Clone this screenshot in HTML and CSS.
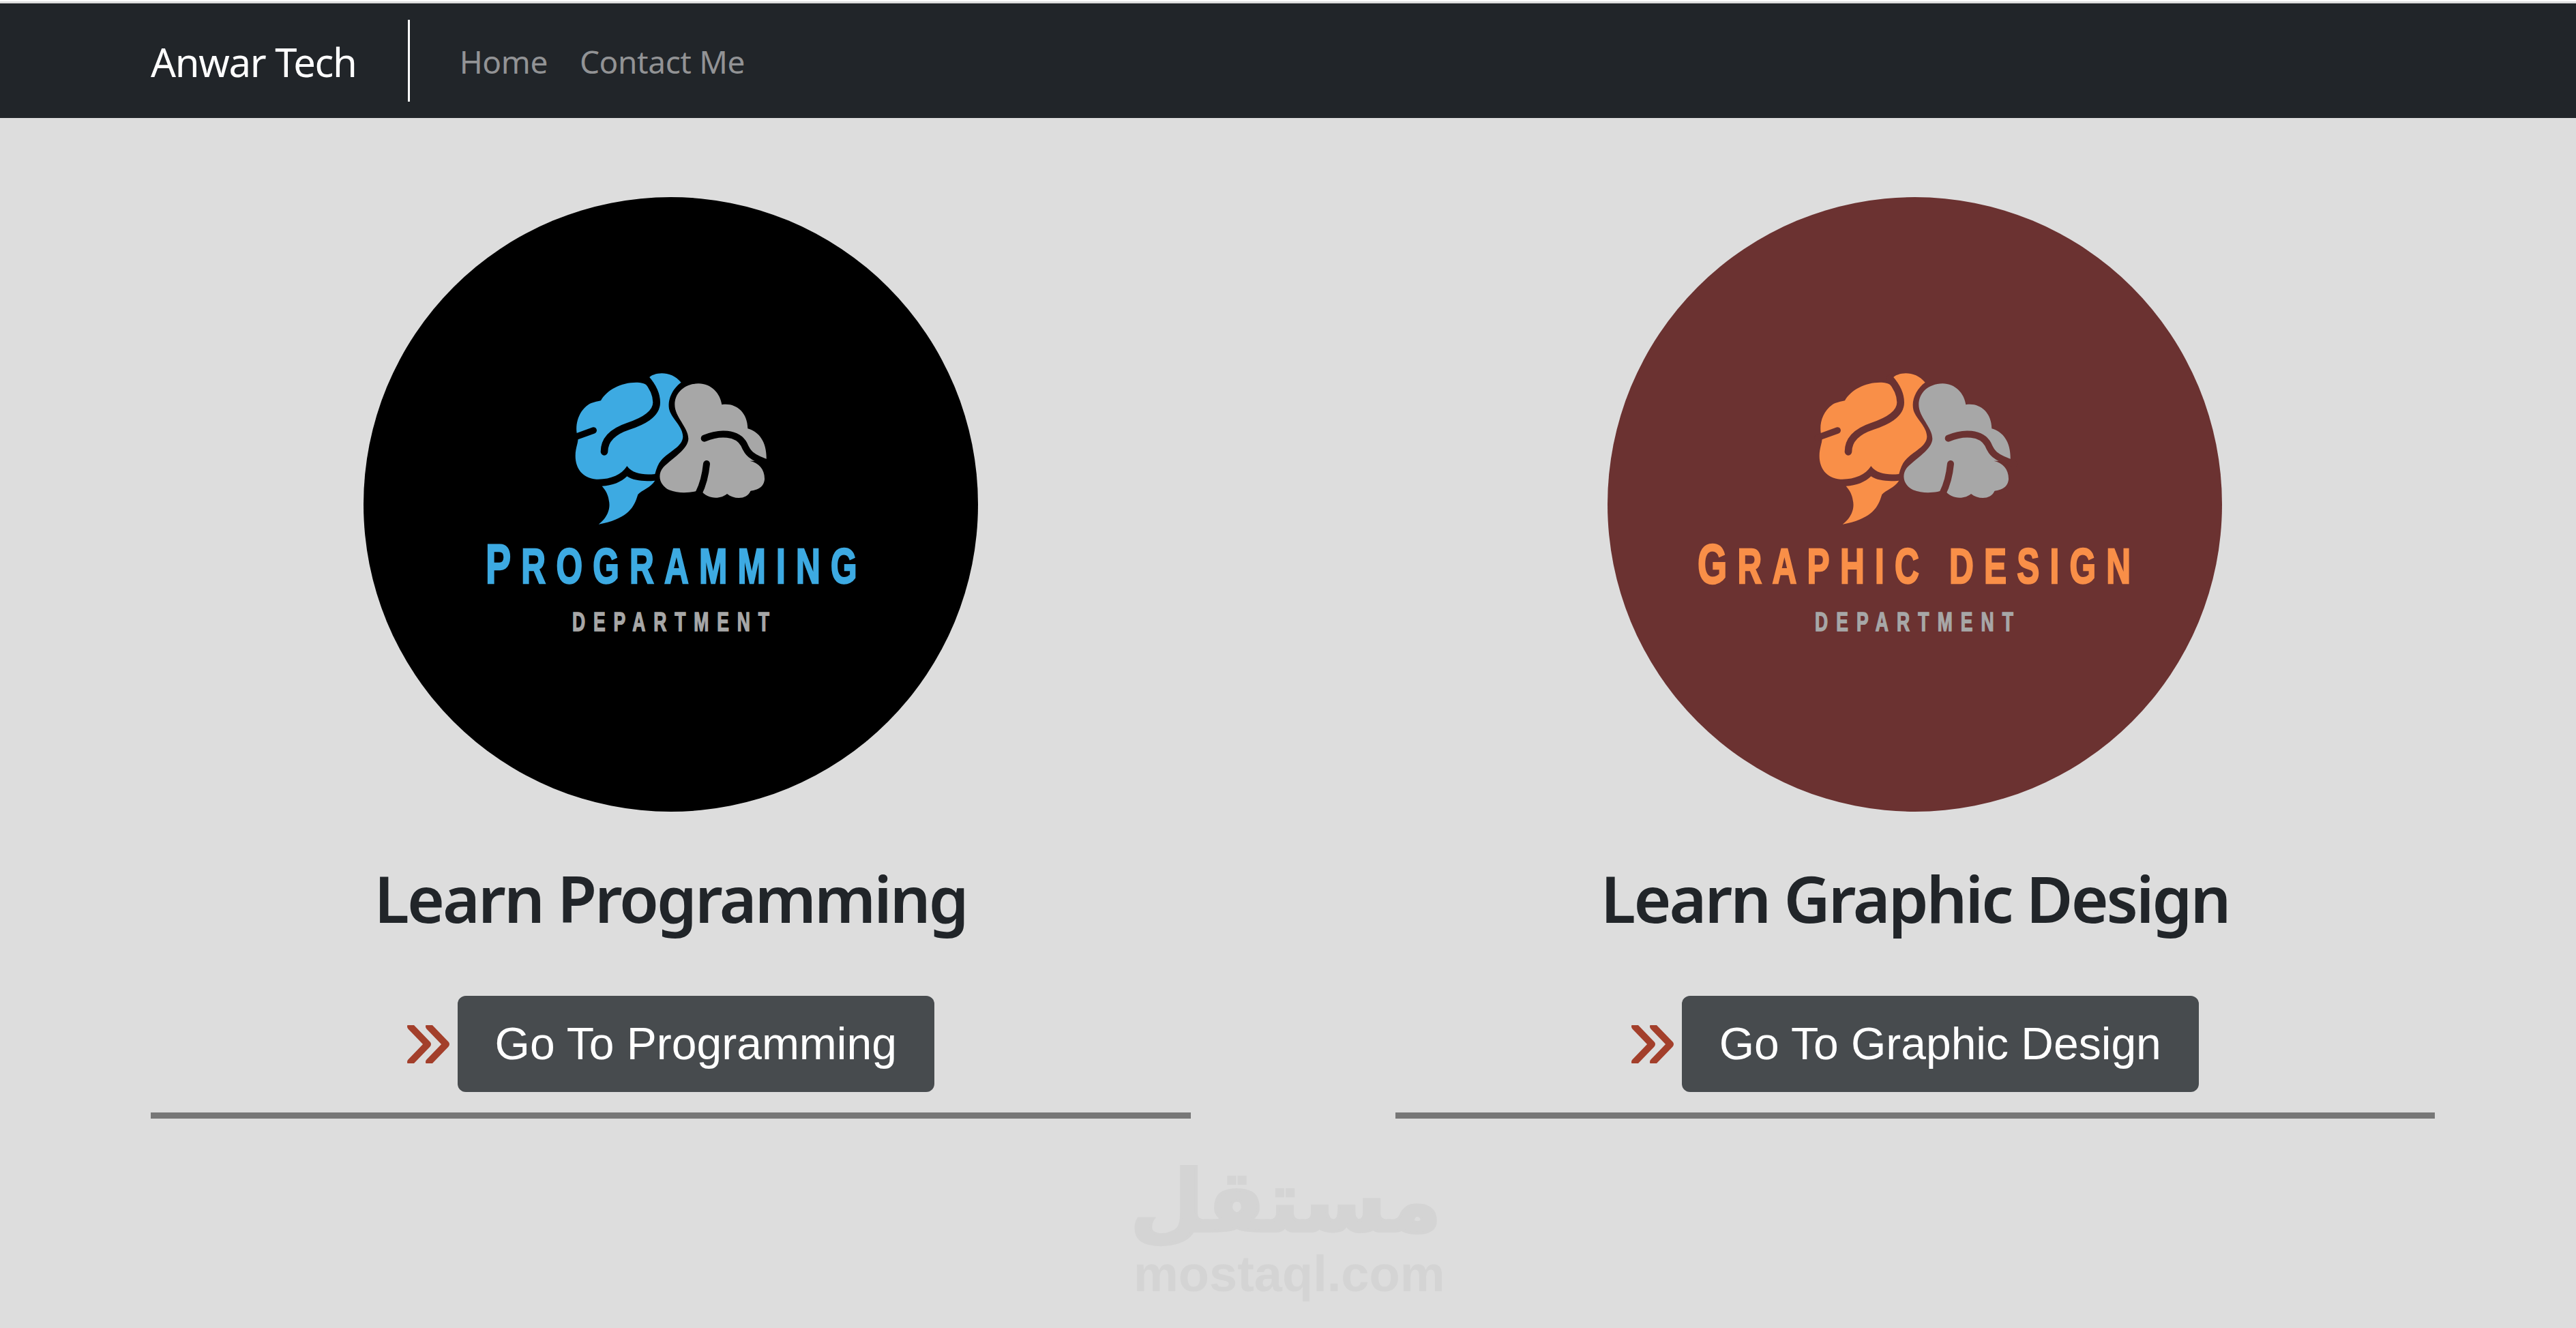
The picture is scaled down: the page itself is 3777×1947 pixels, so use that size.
FILE: index.html
```html
<!DOCTYPE html>
<html lang="en">
	<head>
		<meta charset="UTF-8" />
		<title>Anwar Tech</title>
		<link rel="stylesheet" href="styles.css">
	</head>

	<body>
		<!-- Shared brain drawing, coordinates are 3x page pixels -->
		<svg class="sprite" aria-hidden="true">
			<symbol id="brain" viewBox="0 0 960 750">
				<path class="lobeLeft" d="M390 72C415 45 490 38 533 92C495 120 470 170 482 215C495 255 540 285 541 330C540 375 480 395 445 435C432 450 425 470 418 495C370 500 320 495 295 460C270 500 220 520 160 518C100 515 68 470 68 415C68 375 85 350 78 330C65 290 75 225 125 190C140 180 165 175 180 172C205 125 270 92 335 92C355 92 370 95 385 105Z" />
				<path class="lobeLeft" d="M185 548C230 547 270 530 295 505C325 525 370 528 418 524C400 555 360 565 343 585C330 625 315 690 170 716C205 690 225 650 215 610C212 585 200 565 185 548Z" />
				<path class="fold" stroke-width="32" d="M378 75C400 100 425 140 425 180C425 235 360 265 300 285C240 305 195 340 195 397" />
				<path class="fold" stroke-width="28" d="M60 335L148 303" />
				<path class="lobeRight" d="M505 190C505 140 545 98 610 97C665 97 705 140 712 190C770 180 825 220 826 295C880 310 912 360 908 438L835 437C875 445 902 475 900 520C895 560 860 565 838 570C825 605 770 610 735 582C710 605 650 610 618 565C590 575 530 585 480 565C440 545 425 500 455 465C490 430 565 385 565 340C565 290 505 245 505 190Z" />
				<path class="fold" stroke-width="30" d="M635 338C700 310 780 310 810 365C825 400 835 420 925 450" />
				<path class="fold" stroke-width="30" d="M645 450C640 500 630 540 610 580" />
			</symbol>
			<symbol id="chevrons" viewBox="0 0 62 56">
				<path d="M5 2L30 28L5 54M32 2L57 28L32 54" />
			</symbol>
		</svg>

		<nav class="navbar">
			<a class="brand" href="#">Anwar Tech</a>
			<div class="navLinks">
				<a href="#">Home</a>
				<a href="#">Contact Me</a>
			</div>
		</nav>

		<main class="departments">
			<section class="department">
				<svg class="badge badgeCode" viewBox="0 0 901 901">
					<circle class="badgeBack" cx="450.5" cy="450.5" r="450.5" />
					<use href="#brain" x="288" y="241" width="320" height="250" />
					<text class="badgeTitle" transform="translate(179 566) scale(.68 1)" textLength="801" lengthAdjust="spacing"><tspan class="badgeInitial">P</tspan>ROGRAMMING</text>
					<text class="badgeSub" transform="translate(306 636) scale(.68 1)" textLength="425" lengthAdjust="spacing">DEPARTMENT</text>
				</svg>
				<h2>Learn Programming</h2>
				<div class="cta">
					<svg class="chevrons"><use href="#chevrons" /></svg>
					<a class="btn" href="#">Go To Programming</a>
				</div>
				<hr />
			</section>

			<section class="department">
				<svg class="badge badgeDesign" viewBox="0 0 901 901">
					<circle class="badgeBack" cx="450.5" cy="450.5" r="450.5" />
					<use href="#brain" x="288" y="241" width="320" height="250" />
					<text class="badgeTitle" transform="translate(132 566) scale(.68 1)" textLength="934" lengthAdjust="spacing"><tspan class="badgeInitial">G</tspan>RAPHIC DESIGN</text>
					<text class="badgeSub" transform="translate(304 636) scale(.68 1)" textLength="428" lengthAdjust="spacing">DEPARTMENT</text>
				</svg>
				<h2>Learn Graphic Design</h2>
				<div class="cta">
					<svg class="chevrons"><use href="#chevrons" /></svg>
					<a class="btn" href="#">Go To Graphic Design</a>
				</div>
				<hr />
			</section>
		</main>

		<!-- Site watermark over the page -->
		<div class="watermark">
			<div class="watermarkAr" lang="ar" dir="rtl">مستقل</div>
			<div class="watermarkEn">mostaql.com</div>
		</div>
	</body>
</html>
```

FILE: styles.css
```css
html {
	background: #fff;
}

body {
	margin: 0;
	height: 1945px;
	margin-top: 2px;
	overflow: hidden;
	position: relative;
	background: #ddd;
	padding-top: 3px;
	box-sizing: border-box;
	font-family: "Noto Sans", "Open Sans", sans-serif;
	color: #212529;
}

a {
	text-decoration: none;
}

.sprite {
	display: none;
}

.navbar {
	display: flex;
	align-items: center;
	height: 168px;
	padding-left: 221px;
	background: #212529;
}

.brand {
	padding-right: 75px;
	border-right: 3px solid #fff;
	height: 120px;
	line-height: 124px;
	font-size: 58px;
	letter-spacing: -1.3px;
	color: #fff;
}

.navLinks {
	display: flex;
	gap: 47px;
	padding: 2px 0 0 73px;
	font-size: 46px;
	letter-spacing: -.4px;
}

.navLinks a {
	color: #929395;
}

.departments {
	display: grid;
	grid-template-columns: repeat(2, 1fr);
	gap: 300px;
	padding: 116px 207px 0 221px;
}

.department {
	display: flex;
	flex-direction: column;
	align-items: center;
}

.badge {
	display: block;
	width: 901px;
	height: 901px;
}

.badgeCode {
	--back: #000;
	--accent: #3daae2;
}

.badgeDesign {
	--back: #6b3231;
	--accent: #f98f48;
}

.badgeBack {
	fill: var(--back);
}

.lobeLeft {
	fill: var(--accent);
}

.lobeRight {
	fill: #a7a7a7;
}

.fold {
	fill: none;
	stroke: var(--back);
	stroke-linecap: round;
}

.badgeTitle {
	font-family: "Liberation Sans", sans-serif;
	font-weight: 700;
	font-size: 73px;
	fill: var(--accent);
	stroke: var(--accent);
	stroke-width: 2.5;
}

.badgeInitial {
	font-size: 82px;
}

.badgeSub {
	font-family: "Liberation Sans", sans-serif;
	font-weight: 700;
	font-size: 39px;
	fill: #a7a7a7;
	stroke: #a7a7a7;
	stroke-width: 1.5;
}

h2 {
	margin: 70px 0 0;
	font-size: 94px;
	font-weight: 600;
	line-height: 115px;
	letter-spacing: -3px;
	white-space: nowrap;
}

.cta {
	display: flex;
	align-items: center;
	gap: 12px;
	margin-top: 85px;
}

.chevrons {
	width: 62px;
	height: 56px;
	fill: none;
	stroke: #a33f2b;
	stroke-width: 10;
	stroke-linecap: round;
	stroke-linejoin: round;
}

.btn {
	display: block;
	padding: 0 55px;
	height: 141px;
	line-height: 141px;
	border-radius: 12px;
	background: #474b4e;
	color: #fff;
	font-family: "Liberation Sans", Arial, sans-serif;
	font-size: 66px;
	white-space: nowrap;
}

hr {
	width: 100%;
	height: 9px;
	margin: 30px 0 0;
	border: 0;
	background: #777;
}

.watermark {
	position: absolute;
	left: 1662px;
	top: 1697px;
	width: 452px;
	color: #d4d4d4;
	text-align: center;
}

.watermarkAr {
	height: 132px;
	line-height: 126px;
	font-family: "DejaVu Sans", sans-serif;
	font-weight: 700;
	font-size: 125px;
	-webkit-text-stroke: 4px #d4d4d4;
	white-space: nowrap;
}

.watermarkEn {
	font-family: "Liberation Sans", sans-serif;
	font-weight: 700;
	font-size: 74px;
	line-height: 74px;
}
```
